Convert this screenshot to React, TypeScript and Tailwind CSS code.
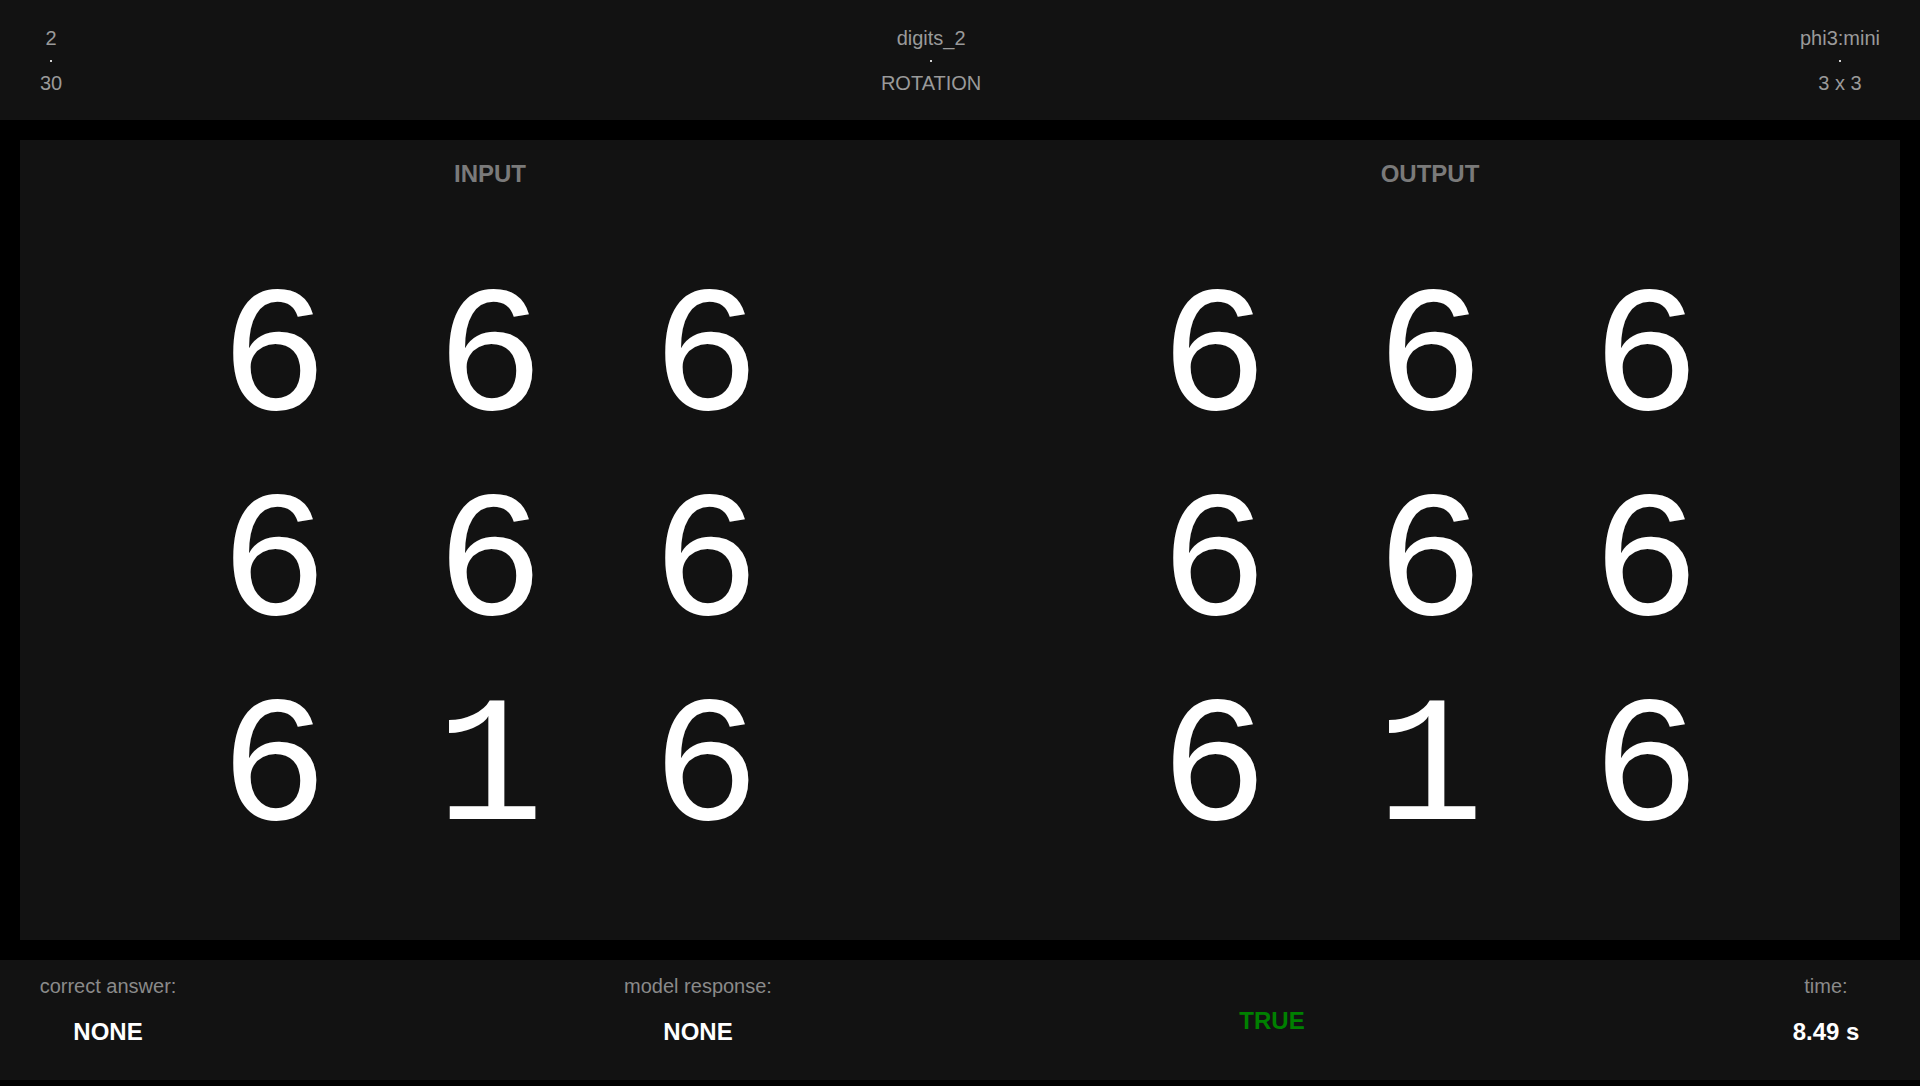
import React from 'react';

const inputGrid = ['6 6 6', '6 6 6', '6 1 6'];
const outputGrid = ['6 6 6', '6 6 6', '6 1 6'];

const Stat = ({ top, bottom }: { top: string; bottom: string }) => (
  <div className="flex flex-col items-center">
    <span className="text-[20px] leading-[22px] text-[#9a9a9a]">{top}</span>
    <span className="mt-[11px] mb-[10px] h-[2px] w-[2px] bg-[#d0d0d0]" />
    <span className="text-[20px] leading-[22px] text-[#9a9a9a]">{bottom}</span>
  </div>
);

const GridPanel = ({ title, rows }: { title: string; rows: string[] }) => (
  <div className="flex flex-1 flex-col items-center pt-5">
    <h2 className="text-[24px] leading-[28px] font-bold text-[#7a7a7a]">{title}</h2>
    <div className="mt-[71px] flex flex-col items-center">
      {rows.map((row, i) => (
        <div
          key={i}
          className="whitespace-pre text-[180px] leading-[205px] text-white"
          style={{ fontFamily: '"Liberation Mono", monospace' }}
        >
          {row}
        </div>
      ))}
    </div>
  </div>
);

const Result = ({ label, value }: { label: string; value: string }) => (
  <div className="flex flex-col items-center pb-5">
    <span className="text-[20px] leading-[22px] whitespace-nowrap text-[#8a8a8a]">{label}</span>
    <span className="mt-[21px] text-[24px] leading-[27px] font-bold whitespace-nowrap text-white">{value}</span>
  </div>
);

export default function App() {
  return (
    <div
      className="flex h-[1086px] w-[1920px] flex-col bg-black"
      style={{ fontFamily: '"Liberation Sans", Arial, sans-serif' }}
    >
      <header className="flex h-[120px] items-center justify-between bg-[#121212] px-10">
        <Stat top="2" bottom="30" />
        <Stat top="digits_2" bottom="ROTATION" />
        <Stat top="phi3:mini" bottom="3 x 3" />
      </header>

      <main className="mx-5 mt-5 flex h-[800px] bg-[#121212]">
        <GridPanel title="INPUT" rows={inputGrid} />
        <GridPanel title="OUTPUT" rows={outputGrid} />
      </main>

      <footer className="mt-5 flex h-[120px] items-center bg-[#121212] pl-10">
        <div className="flex w-[136px] justify-center">
          <Result label="correct answer:" value="NONE" />
        </div>
        <div className="ml-[422px] flex w-[200px] justify-center">
          <Result label="model response:" value="NONE" />
        </div>
        <div className="ml-[374px] flex w-[200px] justify-center">
          <span className="text-[24px] leading-[27px] font-bold text-[#008000]">TRUE</span>
        </div>
        <div className="ml-[400px] flex w-[108px] justify-center">
          <Result label="time:" value="8.49 s" />
        </div>
      </footer>
    </div>
  );
}
